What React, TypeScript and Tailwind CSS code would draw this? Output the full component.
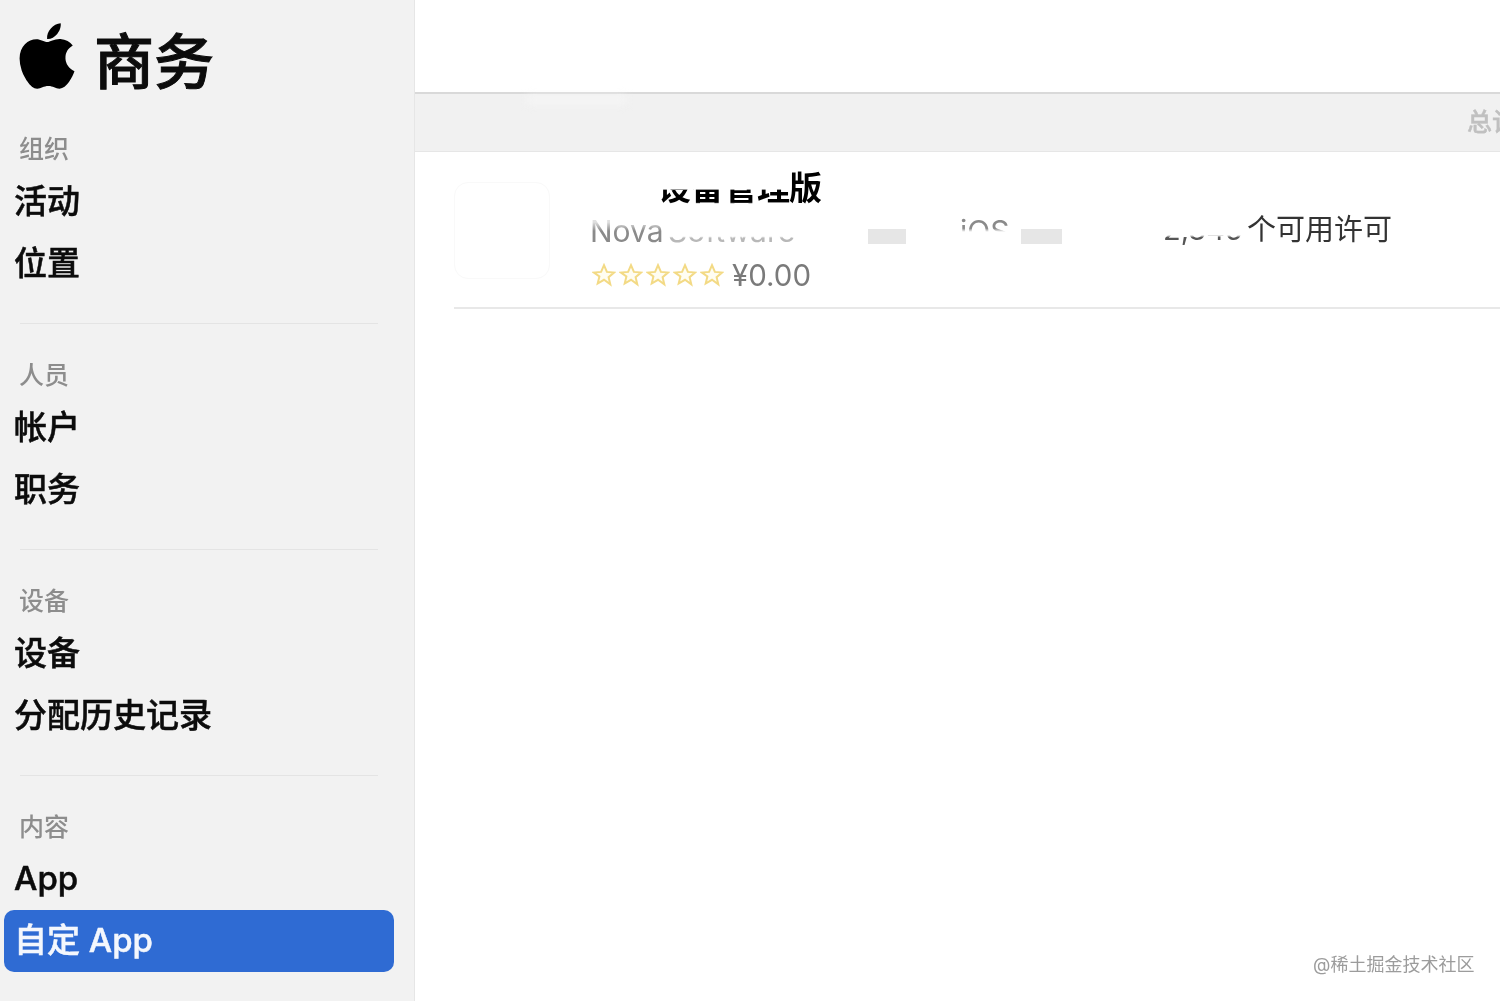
import { FaApple } from 'react-icons/fa';

const sections = [
  { title: '组织', items: ['活动', '位置'] },
  { title: '人员', items: ['帐户', '职务'] },
  { title: '设备', items: ['设备', '分配历史记录'] },
  { title: '内容', items: ['App', '自定 App'] },
];

function Star() {
  return (
    <svg viewBox="0 0 24 24" className="w-[24px] h-[24px] mr-[3px]" fill="#fffdf2" stroke="#f3da85" strokeWidth="2">
      <path d="M12 2.2l2.9 6.7 7.2.6-5.5 4.7 1.7 7.1L12 16.8l-6.3 3.7 1.7-7.1L1.9 9.5l7.2-.6z" />
    </svg>
  );
}

function Sidebar() {
  return (
    <aside className="w-[415px] shrink-0 h-full bg-[#f2f2f2] border-r border-[#e6e6e6]">
      {/* Logo */}
      <div className="h-[128px] flex items-start pl-[19px] pt-[18px] gap-[19px]">
        <FaApple className="w-[56px] h-[76px] text-black" />
        <span className="text-[60px] leading-[88px] font-medium [-webkit-text-stroke:1px_#0c0c0c] text-[#0c0c0c]">商务</span>
      </div>

      {sections.map((section, i) => (
        <div key={section.title}>
          <div className="h-[42px] pt-[2px] pl-[19px] flex items-center text-[25px] font-medium text-[#8d8d8d]">{section.title}</div>
          {section.items.map((item) => {
            const selected = item === '自定 App';
            return (
              <div
                key={item}
                className={`h-[62px] ml-[4px] w-[390px] flex items-center text-[33px] font-medium [-webkit-text-stroke:0.5px] ${
                  selected ? 'bg-[#2f6bd3] text-[#f4f7fd] rounded-[10px] pl-[10px]' : 'text-[#0c0c0c] pl-[10px]'
                } ${item.includes('App') ? '' : 'pt-[2px]'}`}
              >
                {item}
              </div>
            );
          })}
          {i < sections.length - 1 && <div className="mt-[29px] mb-[30px] ml-[20px] w-[358px] h-[1px] bg-[#e4e4e4]" />}
        </div>
      ))}
    </aside>
  );
}

function AppRow() {
  return (
    <div className="ml-[39px] h-[157px] border-b-2 border-[#e8e8e8] flex">
      {/* Empty app tile */}
      <div className="mt-[30px] w-[96px] h-[97px] rounded-[14px] border border-[#f9f9f9] shrink-0" />

      <div className="ml-[40px] w-[573px] shrink-0 pt-[15px]">
        {/* Name, partly wiped out in the screenshot */}
        <div className="h-[42px] flex text-[33px] leading-[42px] font-bold text-black whitespace-nowrap">
          <span className="w-[68px]" />
          <span className="[mask-image:linear-gradient(to_bottom,transparent_52%,black_56%,black_84%,transparent_88%)]">设备管理</span>
          <span className="ml-[-1px]">版</span>
        </div>

        {/* Developer line, wiped out too */}
        <div className="h-[44px] flex items-center text-[30px] leading-[44px] text-[#8a8a8a] whitespace-nowrap">
          <span className="w-[78px] [mask-image:linear-gradient(to_bottom,#0004_30%,black_50%)]">Nova</span>
          <span className="w-[134px] opacity-60 [mask-image:linear-gradient(to_bottom,transparent_62%,black_66%)]">Software</span>
          <span className="ml-[66px] w-[38px] h-[15px] mt-[10px] bg-[#e6e6e6]" />
          <span className="ml-[54px] w-[56px] [mask-image:linear-gradient(to_bottom,black_44%,transparent_52%)]">iOS</span>
          <span className="ml-[5px] w-[41px] h-[15px] mt-[10px] bg-[#e6e6e6]" />
        </div>

        <div className="h-[44px] flex items-center pl-[2px]">
          <Star />
          <Star />
          <Star />
          <Star />
          <Star />
          <span className="ml-[5px] text-[29.5px] text-[#7a7a7a]">¥0.00</span>
        </div>
      </div>

      <div className="flex items-start mt-[57px] text-[29px] leading-[42px] text-[#333] whitespace-nowrap">
        <span className="w-[84px] text-[#555] [mask-image:linear-gradient(to_bottom,transparent_62%,black_68%)]">2,345</span>
        个可用许可
      </div>
    </div>
  );
}

export default function App() {
  return (
    <div className="relative w-[1500px] h-[1001px] overflow-hidden bg-white flex blur-[0.5px] font-['Inter','Noto_Sans_CJK_SC',sans-serif]">
      <Sidebar />

      <main className="flex-1 min-w-0">
        <div className="h-[92px] bg-white" />
        {/* Table header band */}
        <div className="relative h-[60px] bg-[#f1f1f1] border-t-2 border-b border-t-[#d9d9d9] border-b-[#e6e6e6] flex items-center justify-end">
          <span className="mr-[-17px] text-[25px] font-medium [-webkit-text-stroke:0.4px] text-[#c0c0c0] whitespace-nowrap">总计</span>
          <div className="absolute left-[112px] top-[2px] w-[100px] h-[8px] bg-[#f6f6f6] blur-[4px]" />
        </div>
        <AppRow />
      </main>

      {/* Site watermark */}
      <span className="absolute left-[1313px] top-[952px] text-[18px] leading-[26px] text-[#9c9c9c] whitespace-nowrap">@稀土掘金技术社区</span>
    </div>
  );
}
